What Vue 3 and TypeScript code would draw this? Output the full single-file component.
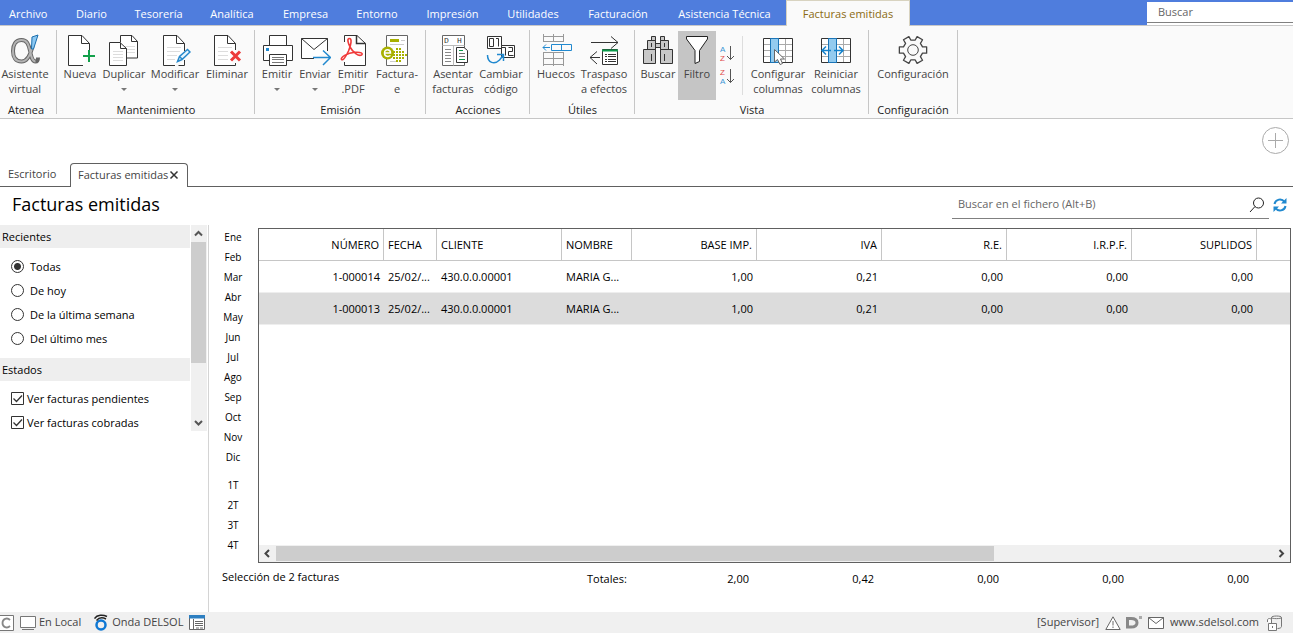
<script setup lang="ts">
import { ref } from 'vue'

interface RibbonButton {
  icon: string
  lines: string[]
  arrow?: boolean
  active?: boolean
}
interface RibbonGroup {
  key: string
  label: string
  buttons: RibbonButton[]
}
interface Column {
  key: string
  label: string
  numeric: boolean
}

const menu: string[] = [
  'Archivo', 'Diario', 'Tesorería', 'Analítica', 'Empresa', 'Entorno',
  'Impresión', 'Utilidades', 'Facturación', 'Asistencia Técnica', 'Facturas emitidas',
]

const groups: RibbonGroup[] = [
  { key: 'atenea', label: 'Atenea', buttons: [{ icon: 'alpha', lines: ['Asistente', 'virtual'] }] },
  {
    key: 'mantenimiento',
    label: 'Mantenimiento',
    buttons: [
      { icon: 'new', lines: ['Nueva'] },
      { icon: 'copy', lines: ['Duplicar'], arrow: true },
      { icon: 'edit', lines: ['Modificar'], arrow: true },
      { icon: 'delete', lines: ['Eliminar'] },
    ],
  },
  {
    key: 'emision',
    label: 'Emisión',
    buttons: [
      { icon: 'printer', lines: ['Emitir'], arrow: true },
      { icon: 'send', lines: ['Enviar'], arrow: true },
      { icon: 'pdf', lines: ['Emitir', '.PDF'] },
      { icon: 'einvoice', lines: ['Factura-', 'e'] },
    ],
  },
  {
    key: 'acciones',
    label: 'Acciones',
    buttons: [
      { icon: 'post', lines: ['Asentar', 'facturas'] },
      { icon: 'code', lines: ['Cambiar', 'código'] },
    ],
  },
  {
    key: 'utiles',
    label: 'Útiles',
    buttons: [
      { icon: 'gaps', lines: ['Huecos'] },
      { icon: 'transfer', lines: ['Traspaso', 'a efectos'] },
    ],
  },
  {
    key: 'vista',
    label: 'Vista',
    buttons: [
      { icon: 'binoculars', lines: ['Buscar'] },
      { icon: 'filter', lines: ['Filtro'], active: true },
      { icon: 'sort', lines: [] },
      { icon: 'columns', lines: ['Configurar', 'columnas'] },
      { icon: 'reset', lines: ['Reiniciar', 'columnas'] },
    ],
  },
  { key: 'config', label: 'Configuración', buttons: [{ icon: 'gear', lines: ['Configuración'] }] },
]

const sortOrders = [
  { key: 'asc', first: 'A', second: 'Z', label: 'Orden ascendente' },
  { key: 'desc', first: 'Z', second: 'A', label: 'Orden descendente' },
]

const recents: string[] = ['Todas', 'De hoy', 'De la última semana', 'Del último mes']
const recent = ref('Todas')
const states = ref([
  { label: 'Ver facturas pendientes', on: true },
  { label: 'Ver facturas cobradas', on: true },
])

const months: string[] = ['Ene', 'Feb', 'Mar', 'Abr', 'May', 'Jun', 'Jul', 'Ago', 'Sep', 'Oct', 'Nov', 'Dic']
const quarters: string[] = ['1T', '2T', '3T', '4T']

const columns: Column[] = [
  { key: 'numero', label: 'NÚMERO', numeric: true },
  { key: 'fecha', label: 'FECHA', numeric: false },
  { key: 'cliente', label: 'CLIENTE', numeric: false },
  { key: 'nombre', label: 'NOMBRE', numeric: false },
  { key: 'base', label: 'BASE IMP.', numeric: true },
  { key: 'iva', label: 'IVA', numeric: true },
  { key: 're', label: 'R.E.', numeric: true },
  { key: 'irpf', label: 'I.R.P.F.', numeric: true },
  { key: 'suplidos', label: 'SUPLIDOS', numeric: true },
]
const rows: string[][] = [
  ['1-000014', '25/02/...', '430.0.0.00001', 'MARIA G...', '1,00', '0,21', '0,00', '0,00', '0,00'],
  ['1-000013', '25/02/...', '430.0.0.00001', 'MARIA G...', '1,00', '0,21', '0,00', '0,00', '0,00'],
]
const selectedRow = ref(1)
const totals: string[] = ['2,00', '0,42', '0,00', '0,00', '0,00']

// Outline of a six-tooth gear centred in a 32-unit box.
const gearPoints: string = Array.from({ length: 6 }, (_, tooth) => {
  const profile: [number, number][] = [[-18, 10], [-13, 14], [13, 14], [18, 10]]
  return profile
    .map(([offset, radius]) => {
      const angle = ((tooth * 60 + offset) * Math.PI) / 180
      return `${(16 + radius * Math.cos(angle)).toFixed(2)},${(16 + radius * Math.sin(angle)).toFixed(2)}`
    })
    .join(' ')
}).join(' ')

// Dot matrix to the right of the e-invoice emblem.
const dots: [number, number][] = [
  [15, 14], [18, 14],
  [12, 17], [15, 17], [18, 17], [21, 17],
  [12, 20], [15, 20], [18, 20], [21, 20], [24, 20],
  [12, 23], [15, 23], [18, 23], [21, 23],
  [15, 26], [18, 26],
]
</script>

<template>
  <div class="page">
    <header class="menubar">
      <nav class="menu">
        <button
          v-for="(item, i) in menu"
          :key="item"
          type="button"
          class="menu-item"
          :class="{ first: i === 0, current: i === menu.length - 1 }"
        >{{ item }}</button>
      </nav>
      <input class="global-search" type="text" placeholder="Buscar" aria-label="Buscar" />
    </header>

    <section class="ribbon">
      <div v-for="g in groups" :key="g.key" class="group" :class="g.key">
        <div class="tools">
          <template v-for="b in g.buttons" :key="b.icon">
            <div v-if="b.icon === 'sort'" class="sorts">
              <button v-for="s in sortOrders" :key="s.key" type="button" class="sort" :aria-label="s.label">
                <svg viewBox="0 0 16 20" width="16" height="20">
                  <text x="1" y="8" class="sort-letter" :class="s.first">{{ s.first }}</text>
                  <text x="1" y="17" class="sort-letter" :class="s.second">{{ s.second }}</text>
                  <path d="M11.500 2V15.500M8 12l3.500 3.500L15 12" fill="none" stroke="#555" />
                </svg>
              </button>
            </div>
            <button v-else type="button" class="tool" :class="{ active: b.active }">
              <svg class="icon" viewBox="0 0 32 32" fill="none" stroke="#333" stroke-width="1">
                <template v-if="b.icon === 'alpha'">
                  <path d="M12.500 6C6.500 6 4 11 4 17s2.500 10.500 8.500 10.500c6 0 9-6.500 11-15.500M12.500 6c5.500 0 7 4 8.500 10.500 1.300 7 2.500 11 5.500 11 1.500 0 2.500-1 2.500-4" stroke="#666" stroke-width="4" />
                  <path d="M12.500 6C6.500 6 4 11 4 17s2.500 10.500 8.500 10.500c6 0 9-6.500 11-15.500M12.500 6c5.500 0 7 4 8.500 10.500 1.300 7 2.500 11 5.500 11" stroke="#b4b4b4" stroke-width="2" />
                  <path d="M23 3l6-2-4.500 14h-2z" fill="#8cc8f2" stroke="#1b6fae" />
                </template>
                <template v-else-if="b.icon === 'new'">
                  <path d="M19 31.500H4.500V1.500H18l7.500 8V17" fill="#fff" />
                  <path d="M17.500 1.500v8h8" />
                  <path d="M25 16v12M19 22h12" stroke="#12a04b" stroke-width="2" />
                </template>
                <template v-else-if="b.icon === 'copy'">
                  <path d="M12.500 8V1.500H24l5.500 6v16.500H19" fill="#fff" />
                  <path d="M23.500 1.500v6h6" />
                  <path d="M17 12.500h10M19 15.500h8M19 18.500h8" stroke="#ddd" />
                  <path d="M1.500 8.500H12l6.500 6v17h-17z" fill="#fff" />
                  <path d="M12.500 8.500v6h6" />
                  <path d="M5 17.500h10M5 20.500h10M5 23.500h10M5 26.500h10" stroke="#ddd" />
                </template>
                <template v-else-if="b.icon === 'edit'">
                  <path d="M16 31.500H4.500V1.500H18l7.500 8V17M25.500 26v5.500h-6" fill="#fff" />
                  <path d="M17.500 1.500v8h8" />
                  <path d="M8 13.500h14M8 17.500h13M8 21.500h10M8 25.500h8" stroke="#ddd" />
                  <path d="M18.500 27.500l2-5 8-7 2.500 2.500-8 7.500zM20.500 22.500l3 3" fill="#e8f5fd" stroke="#2789cc" stroke-width="1.500" />
                </template>
                <template v-else-if="b.icon === 'delete'">
                  <path d="M21 31.500H3.500V1.500H17l7.500 8V16M24.500 29v2.500h-4" fill="#fff" />
                  <path d="M16.500 1.500v8h8" />
                  <path d="M7 13.500h14M7 17.500h10M7 21.500h10M7 25.500h10" stroke="#ddd" />
                  <path d="M20 17.500l9 9M29 17.500l-9 9" stroke="#ed3b3b" stroke-width="3" />
                </template>
                <template v-else-if="b.icon === 'printer'">
                  <path d="M8.500 11.500v-10h17v10" fill="#fff" />
                  <path d="M8 26.500H2.500v-15h29v15H26" fill="#fff" />
                  <path d="M8.500 20.500h17v11h-17z" fill="#fff" />
                  <path d="M11 23.500h12M11 25.500h12M11 28.500h12" stroke="#777" />
                  <path d="M5 14h3v3H5z" fill="#2189cf" stroke="none" />
                </template>
                <template v-else-if="b.icon === 'send'">
                  <path d="M15 24.500H2.500v-20h26V17" fill="#fff" />
                  <path d="M2.500 4.500L15 15.500l13.500-11" />
                  <path d="M14 23.500h17M24 16.500l7.500 7-7.500 7.500" stroke="#2189cf" stroke-width="1.500" />
                </template>
                <template v-else-if="b.icon === 'pdf'">
                  <path d="M7.500 8V1.500H20l8.500 8v22h-21V28" fill="#fff" />
                  <path d="M19.500 1.500v8h9" stroke-width="1.500" />
                  <path d="M12 4.500c3.500-.5 2 6.500-.5 12.500-2.500 5.500-5.500 10-7 8.500C3 23.500 10 19 18 18.300c6-.5 8.500 1.200 6.500 2.700-3 1.500-8.500-2.500-11.500-8-2-4-3-8-1-8.500z" stroke="#f03a3a" stroke-width="1.600" />
                </template>
                <template v-else-if="b.icon === 'einvoice'">
                  <path d="M5.500 1.500h21v30h-21z" fill="#fff" stroke="#666" />
                  <path d="M9 5h9v3H9z" fill="#a8b000" stroke="none" />
                  <path d="M9 10.500h14M20 6.500h4M9 27.500h8" stroke="#ccc" />
                  <circle cx="6.500" cy="19" r="6.500" fill="#a8b000" stroke="none" />
                  <path d="M3.500 19h6c0-4-6-4.500-6 0 0 4 4 4 6 2.500" stroke="#fff" stroke-width="1.500" />
                  <rect v-for="d in dots" :key="d.join()" :x="d[0]" :y="d[1]" width="2" height="2" fill="#a8b000" stroke="none" />
                </template>
                <template v-else-if="b.icon === 'post'">
                  <path d="M5.500 1.500h22v30h-22z" fill="#fff" stroke="#666" />
                  <path d="M5.500 11.500h22M16.500 11.500v20" stroke="#bbb" />
                  <text x="7" y="9" class="glyph">D</text>
                  <text x="20" y="9" class="glyph">H</text>
                  <path d="M8 15.500h6M8 18.500h6M8 21.500h6M8 24.500h6M8 27.500h6" stroke="#888" />
                  <path d="M19.500 13.500H27l3.500 3v12h-11z" fill="#fff" />
                  <path d="M22 16.500h4M22 25.500h6" stroke="#0b9a4a" />
                  <path d="M22 19.500h6M22 22.500h6" stroke="#777" />
                </template>
                <template v-else-if="b.icon === 'code'">
                  <path d="M2.500 2.500h14v12h-14z" fill="#fff" />
                  <path d="M4.500 4.500h4v8h-4zM11 4.500h2.500v8" />
                  <path d="M16.500 11.500h13v12h-13z" fill="#fff" />
                  <path d="M16.500 13.500h4v8M23.500 13.500h4v4h-4v4h5" />
                  <path d="M2.500 21c0 8 7 10 12 5l4-5M12 20.500h6.500V27" stroke="#2189cf" stroke-width="1.500" />
                </template>
                <template v-else-if="b.icon === 'gaps'">
                  <path d="M3 2.500h21M3 7.500h21M3.500 0v8M13.500 0v8M23.500 0v8M3 18.500h21M3 24.500h21M3 30.500h21M3.500 18v14M13.500 18v14M23.500 18v14" stroke="#999" />
                  <path d="M11.500 10.500h20v6h-20zM21.500 10.500v6M3 13.500h7M6 10.500l-3 3 3 3" stroke="#2189cf" />
                </template>
                <template v-else-if="b.icon === 'transfer'">
                  <path d="M3 8.500h27M23 2.500l7 6-7 6M12 23.500H2M9 17.500l-7 6 7 6.500" />
                  <path d="M14.500 15.500h15v15h-15z" fill="#fff" />
                  <path d="M14 16.500h16" stroke="#0b9a4a" stroke-width="2" />
                  <path d="M17 20.500h2M17 22.500h2M17 25.500h2M17 27.500h2M20 20.500h8M20 22.500h8M20 25.500h8M20 27.500h8" />
                </template>
                <template v-else-if="b.icon === 'binoculars'">
                  <path d="M9.500 2.500h4v4h-4zM18.500 2.500h4v4h-4zM5.500 6.500h8v9h-8zM18.500 6.500h8v9h-8zM1.500 15.500h12v14h-12zM18.500 15.500h12v14h-12zM13.500 9.500h5v4h-5z" fill="#c8c8c8" />
                  <path d="M9.500 20v7M22.500 20v7M9.500 9v4M22.500 9v4" />
                </template>
                <template v-else-if="b.icon === 'filter'">
                  <path d="M5.500 2.500h21v2.500l-8 11.500v11l-4.500 2v-13L5.500 5z" fill="#fff" stroke="#222" />
                </template>
                <template v-else-if="b.icon === 'columns' || b.icon === 'reset'">
                  <path d="M1 4h30v25H1z" fill="#fff" stroke="none" />
                  <path d="M2 10.500h29M2 16.500h29M2 22.500h29M23.500 5v24" stroke="#aaa" />
                  <path d="M1.500 4.500h29v24h-29z" />
                  <path d="M8.500 4.500h8v24h-8z" fill="#93cbef" stroke="#1a75b8" />
                  <path
                    v-if="b.icon === 'columns'"
                    d="M12.500 15.500v12.500l3-2.500 2.500 5 2.500-1-2-4.500h4z"
                    fill="#fff"
                    stroke="#666"
                  />
                  <path v-else d="M2 16.500h9M6 12.500l-4 4 4 4M14 16.500h9M19 12.500l4 4-4 4" stroke="#1583cc" stroke-width="1.500" />
                </template>
                <template v-else-if="b.icon === 'gear'">
                  <polygon :points="gearPoints" stroke="#444" stroke-linejoin="round" stroke-width="1.300" />
                  <circle cx="16" cy="16" r="5.300" stroke="#444" />
                </template>
              </svg>
              <span v-for="l in b.lines" :key="l" class="line">{{ l }}</span>
              <span v-if="b.arrow" class="caret"></span>
            </button>
          </template>
        </div>
        <div class="group-label">{{ g.label }}</div>
      </div>
    </section>

    <div class="add-row">
      <button type="button" class="add" aria-label="Añadir">
        <svg viewBox="0 0 27 27" width="27" height="27" fill="none" stroke="#aaa">
          <circle cx="13.500" cy="13.500" r="13" />
          <path d="M6 13.500h15M13.500 6v15" />
        </svg>
      </button>
    </div>

    <div class="tabs">
      <button type="button" class="tab">Escritorio</button>
      <div class="tab open">
        <button type="button" class="tab-name">Facturas emitidas</button>
        <button type="button" class="close" aria-label="Cerrar">
          <svg viewBox="0 0 10 10" width="10" height="10"><path d="M1.500 1.500l7 7M8.500 1.500l-7 7" stroke="#333" stroke-width="1.500" /></svg>
        </button>
      </div>
      <div class="tabs-rest"></div>
    </div>

    <div class="title-row">
      <h1>Facturas emitidas</h1>
      <div class="file-search">
        <input type="text" placeholder="Buscar en el fichero (Alt+B)" aria-label="Buscar en el fichero" />
        <button type="button" aria-label="Buscar en el fichero">
          <svg viewBox="0 0 16 16" width="16" height="16" fill="none" stroke="#222">
            <circle cx="9.500" cy="6" r="5" />
            <path d="M6 9.500L1 15" />
          </svg>
        </button>
      </div>
      <button type="button" class="refresh" aria-label="Actualizar">
        <svg viewBox="0 0 14 14" width="14" height="14" fill="none" stroke="#2189cf" stroke-width="2">
          <path d="M1.500 6a5.500 5.500 0 0 1 10-2M12.500 8a5.500 5.500 0 0 1-10 2" />
          <path d="M13.500 0v5.500H8zM.5 14V8.500H6z" fill="#2189cf" stroke="none" />
        </svg>
      </button>
    </div>

    <main class="content">
      <aside class="side">
        <div class="side-scroll">
          <div class="filters">
            <h2 id="recientes">Recientes</h2>
            <div class="radios" role="radiogroup" aria-labelledby="recientes">
              <label v-for="r in recents" :key="r" class="radio">
                <input v-model="recent" type="radio" name="recent" :value="r" />{{ r }}
              </label>
            </div>
            <h2>Estados</h2>
            <div class="checks">
              <label v-for="s in states" :key="s.label" class="check">
                <input v-model="s.on" type="checkbox" />
                <svg class="tick" viewBox="0 0 13 13" width="13" height="13" fill="none" stroke="#333">
                  <path d="M.5.500h12v12H.5z" />
                  <path v-if="s.on" d="M2.500 6.500l3 3 5.500-6" stroke-width="1.300" />
                </svg>
                {{ s.label }}
              </label>
            </div>
          </div>
          <div class="vbar">
            <svg viewBox="0 0 16 17" fill="none" stroke="#555" stroke-width="2"><path d="M4 10.500L7.500 7l3.500 3.500" /></svg>
            <div class="vthumb"></div>
            <svg viewBox="0 0 16 17" fill="none" stroke="#555" stroke-width="2"><path d="M4 7l3.500 3.500L11 7" /></svg>
          </div>
        </div>
      </aside>

      <section class="workspace">
        <div class="upper">
          <div class="periods">
            <button v-for="m in months" :key="m" type="button">{{ m }}</button>
            <div class="period-gap"></div>
            <button v-for="q in quarters" :key="q" type="button">{{ q }}</button>
          </div>
          <div class="grid-box">
            <table>
              <colgroup>
                <col v-for="c in columns" :key="c.key" :class="c.key" />
                <col />
              </colgroup>
              <thead>
                <tr>
                  <th v-for="c in columns" :key="c.key" :class="{ num: c.numeric }">{{ c.label }}</th>
                  <th class="filler"></th>
                </tr>
              </thead>
              <tbody>
                <tr v-for="(r, i) in rows" :key="r[0]" :class="{ selected: i === selectedRow }" @click="selectedRow = i">
                  <td v-for="(v, j) in r" :key="j" :class="{ num: columns[j].numeric }">{{ v }}</td>
                  <td></td>
                </tr>
              </tbody>
            </table>
            <div class="hbar">
              <svg viewBox="0 0 17 17" fill="none" stroke="#444" stroke-width="2"><path d="M10 5L6.500 8.500 10 12" /></svg>
              <div class="track"><div class="hthumb"></div></div>
              <svg viewBox="0 0 17 17" fill="none" stroke="#444" stroke-width="2"><path d="M6.500 5L10 8.500 6.500 12" /></svg>
            </div>
          </div>
        </div>
        <footer class="totals">
          <span class="selection">Selección de 2 facturas</span>
          <span class="totals-label">Totales:</span>
          <span v-for="(t, i) in totals" :key="i" class="total">{{ t }}</span>
        </footer>
      </section>
    </main>

    <div class="status">
      <svg viewBox="0 0 14 16" width="14" height="16" fill="none" stroke="#777">
        <path d="M0 .5h13.500v15H0" fill="#fff" />
        <path d="M10 5C7 2 2.500 4 2.500 8s4.500 6 7.500 3" stroke-width="1.800" stroke="#888" />
      </svg>
      <svg class="screen" viewBox="0 0 16 14" width="16" height="14" fill="none" stroke="#777">
        <path d="M.5.500h15v11H.5z" fill="#fff" />
        <path d="M2 13.500h12" />
      </svg>
      <span>En Local</span>
      <svg class="wave" viewBox="0 0 14 17" width="14" height="17" fill="none">
        <circle cx="7" cy="11" r="4.500" stroke="#0f78d4" stroke-width="2.500" />
        <path d="M.5 4.500C3 .5 9 .5 13 2.500M2.500 6.500C5 3.500 9 3.500 12 5" stroke="#222" stroke-width="1.500" />
      </svg>
      <span>Onda DELSOL</span>
      <svg class="panel" viewBox="0 0 16 15" width="16" height="15" fill="none" stroke="#666">
        <path d="M.5.500h15v14H.5z" fill="#fff" />
        <path d="M0 0h16v3.500H0z" fill="#2d7fc1" stroke="none" />
        <path d="M4.500 4v10M6 6.500h8M6 8.500h8M6 10.500h8M7 13h3M11 13h3" />
      </svg>
      <div class="spring"></div>
      <span>[Supervisor]</span>
      <svg class="warn" viewBox="0 0 16 14" width="16" height="14" fill="none" stroke="#666">
        <path d="M8 .800l7.200 12.700H.8z" fill="#fff" />
        <path d="M8 5v4.500M8 10.500V12" />
      </svg>
      <svg class="brand" viewBox="0 0 16 13" width="16" height="13" fill="none">
        <path d="M1.500 2.500H5c4 0 6 1.500 6 4.200s-2 4.300-6 4.300H1.500z" stroke="#888" stroke-width="3" />
        <path d="M13 0h3v3h-3z" fill="#aaa" />
      </svg>
      <svg class="mail" viewBox="0 0 16 12" width="16" height="12" fill="none" stroke="#666">
        <path d="M.5.500h15v11H.5z" fill="#fff" />
        <path d="M.5.500L8 6.500l7.500-6" />
      </svg>
      <a href="#">www.sdelsol.com</a>
      <svg class="lock" viewBox="0 0 16 16" width="16" height="16" fill="none" stroke="#777">
        <path d="M4.500 5V2.500c0-2 10-2 10 0v9c0 1-1.500 2-4 2M4.500 2.500c0 1.500 10 1.500 10 0" />
        <path d="M1.500 8.500h8v7h-8zM5.500 11v2M.5 7V5c0-2 4-2 4 0v3" fill="#fff" />
      </svg>
    </div>
  </div>
</template>

<style>
html,
body {
  margin: 0;
  background: #fff;
}
</style>

<style scoped>
.page {
  display: flex;
  flex-direction: column;
  min-height: 100vh;
  font-family: "Open Sans", "Noto Sans", sans-serif;
  font-size: 11px;
  line-height: 15px;
  color: #000;
  overflow: hidden;
}
* {
  box-sizing: border-box;
}
svg {
  display: block;
  flex: none;
}
button {
  font: inherit;
  color: inherit;
  background: none;
  border: 0;
  padding: 0;
  margin: 0;
  white-space: nowrap;
}
input {
  font: inherit;
  margin: 0;
}

/* Menu bar */
.menubar {
  display: flex;
  justify-content: space-between;
  height: 26px;
  background: linear-gradient(#4f7ddd 25px, #c8c8c8 25px);
}
.menu {
  display: grid;
  grid-template-columns: 61px 61px 73px 74px 73px 70px 81px 80px 90px 123px 124px;
}
.menu-item {
  color: #fff;
}
.menu-item.first {
  text-align: left;
  padding-left: 9px;
}
.menu-item.current {
  background: #fafafa;
  color: #8a6a12;
  border: 1px solid #d8d3c0;
  border-bottom: 0;
}
.global-search {
  width: 146px;
  height: 21px;
  margin-top: 2px;
  border: 0;
  border-bottom: 1px solid #808080;
  padding: 0 11px 2px;
  background: #fff;
  box-shadow: 0 2px #fff;
}
input::placeholder {
  color: #666;
  opacity: 1;
}

/* Ribbon */
.ribbon {
  display: flex;
  height: 93px;
  background: #fafafa;
  border-bottom: 1px solid #c6c6c6;
}
.group {
  display: flex;
  flex-direction: column;
  padding-top: 5px;
  background: linear-gradient(#c6c6c6, #c6c6c6) right 4px / 1px 84px no-repeat;
}
.tools {
  display: grid;
  height: 69px;
}
.atenea { width: 57px; }
.atenea .tools { grid-template-columns: 50px; }
.mantenimiento { width: 198px; }
.mantenimiento .tools { grid-template-columns: 40px 48px 54px 50px; padding-left: 3px; }
.emision { width: 171px; }
.emision .tools { grid-template-columns: 38px 38px 38px 50px; padding-left: 3px; }
.acciones { width: 104px; }
.acciones .tools { grid-template-columns: 50px 46px; padding-left: 2px; }
.utiles { width: 105px; }
.utiles .tools { grid-template-columns: 46px 50px; padding-left: 3px; }
.vista { width: 234px; }
.vista .tools { grid-template-columns: 40px 38px 33px 58px 58px; padding-left: 3px; }
.config { width: 89px; }
.config .tools { grid-template-columns: 88px; }
.group-label {
  margin-top: 3px;
  text-align: center;
  line-height: 14px;
  color: #222;
}
.atenea .group-label {
  padding-right: 5px;
}
.config .group-label {
  padding-right: 1px;
}
.tool {
  display: flex;
  flex-direction: column;
  align-items: center;
  padding-top: 3px;
  color: #444;
}
.tool.active {
  background: #c5c5c5;
}
.icon {
  width: 32px;
  height: 32px;
}
.line {
  line-height: 15px;
}
.caret {
  width: 6px;
  height: 3px;
  margin-top: 7px;
  background: #777;
  clip-path: polygon(0 0, 100% 0, 50% 100%);
}
.glyph {
  font: 8px "Liberation Mono", monospace;
  fill: #333;
  stroke: none;
}
.sorts {
  display: flex;
  flex-direction: column;
  gap: 3px;
  margin-right: 6px;
  padding: 13px 0 0 3px;
  background: linear-gradient(#ddd, #ddd) right 5px / 1px 59px no-repeat;
}
.sort-letter {
  font: 8px "Liberation Sans", sans-serif;
}
.sort-letter.A {
  fill: #3a97d6;
}
.sort-letter.Z {
  fill: #e04b4b;
}

/* Document tabs */
.add-row {
  display: flex;
  justify-content: flex-end;
  height: 44px;
  padding: 8px 4px 0 0;
}
.add {
  width: 27px;
  height: 27px;
}
.tabs {
  display: flex;
  height: 24px;
  color: #444;
}
.tab {
  display: flex;
  align-items: center;
  width: 70px;
  padding: 0 0 2px 8px;
  border-bottom: 1px solid #606060;
}
.tab.open {
  width: 118px;
  padding: 0 8px 2px 7px;
  justify-content: space-between;
  border: 1px solid #606060;
  border-bottom: 0;
  border-radius: 4px 4px 0 0;
}
.tab-name {
  padding-bottom: 1px;
}
.tabs-rest {
  flex: 1;
  border-bottom: 1px solid #606060;
}
.title-row {
  display: flex;
  align-items: flex-start;
  height: 38px;
  padding-right: 6px;
}
h1 {
  flex: 1;
  margin: 0;
  padding: 5px 0 0 12px;
  font-size: 18px;
  line-height: 24px;
  font-weight: 400;
}
.file-search {
  display: flex;
  align-items: center;
  width: 317px;
  height: 32px;
  margin-right: 4px;
  padding: 4px 4px 0 6px;
  border-bottom: 1px solid #808080;
}
.file-search input {
  flex: 1;
  border: 0;
  padding: 0 0 2px;
  background: none;
}
.refresh {
  margin-top: 11px;
}

/* Sidebar */
.content {
  flex: 1;
  display: flex;
}
.side {
  width: 209px;
  flex: none;
  border-right: 1px solid #d4d4d4;
}
.side-scroll {
  display: flex;
  gap: 1px;
  height: 206px;
}
.filters {
  width: 190px;
}
h2 {
  margin: 0;
  padding: 0 2px;
  background: #eee;
  font-size: 11px;
  font-weight: 400;
  line-height: 23px;
}
.radios {
  padding: 6px 0 8px 11px;
}
.checks {
  padding: 5px 0 0 11px;
}
.radio,
.check {
  display: flex;
  align-items: center;
  height: 24px;
  gap: 6px;
}
.check {
  position: relative;
  gap: 3px;
}
.radio input {
  appearance: none;
  width: 13px;
  height: 13px;
  border: 1px solid #333;
  border-radius: 50%;
  background: #fff;
}
.radio input:checked {
  background: radial-gradient(circle, #333 3px, #fff 4px);
}
.check input {
  position: absolute;
  width: 13px;
  height: 13px;
  opacity: 0;
}
.vbar {
  display: flex;
  flex-direction: column;
  justify-content: space-between;
  width: 16px;
  background: #f0f0f0;
}
.vthumb {
  height: 121px;
  margin-bottom: 51px;
  width: 15px;
  background: #cdcdcd;
}

/* Workspace */
.workspace {
  flex: 1;
  min-width: 0;
  display: flex;
  flex-direction: column;
}
.upper {
  flex: 1;
  display: flex;
  padding: 3px 2px 0 0;
}
.periods {
  display: flex;
  flex-direction: column;
  width: 49px;
  flex: none;
  font-size: 10px;
}
.periods button {
  height: 20px;
  padding: 0 1px 2px 0;
}
.period-gap {
  height: 8px;
}
.grid-box {
  flex: 1;
  min-width: 0;
  display: flex;
  flex-direction: column;
  justify-content: space-between;
  border: 1px solid #606060;
  overflow: hidden;
}
table {
  width: 100%;
  table-layout: fixed;
  border-collapse: separate;
  border-spacing: 0;
}
col.numero,
col.cliente,
col.base,
col.iva,
col.re,
col.irpf,
col.suplidos {
  width: 125px;
}
col.fecha {
  width: 53px;
}
col.nombre {
  width: 70px;
}
th,
td {
  height: 32px;
  padding: 0 4px;
  font-weight: 400;
  text-align: left;
  white-space: nowrap;
}
th {
  border-right: 1px solid #c6c6c6;
  border-bottom: 1px solid #c6c6c6;
}
th.filler {
  border-right: 0;
}
td {
  border-bottom: 1px solid #eee;
}
th.num,
td.num {
  text-align: right;
}
.selected {
  background: #dcdcdc;
}
.hbar {
  display: flex;
  height: 17px;
  background: #f0f0f0;
}
.hbar svg {
  width: 17px;
}
.track {
  flex: 1;
}
.hthumb {
  width: 72%;
  height: 15px;
  margin-top: 1px;
  background: #cdcdcd;
}
.totals {
  display: grid;
  grid-template-columns: 362px 40px repeat(5, 125px);
  height: 49px;
  padding: 8px 0 0 13px;
  white-space: nowrap;
}
.selection {
  margin-top: -2px;
}
.totals-label {
  padding-left: 3px;
}
.total {
  text-align: right;
}

/* Status bar */
.status {
  display: flex;
  align-items: center;
  height: 21px;
  padding-right: 10px;
  background: #f0f0f0;
  color: #444;
}
.status span,
.status a {
  padding-bottom: 2px;
}
.screen {
  margin: 0 3px 0 6px;
}
.wave {
  margin: 0 4px 0 13px;
}
.panel {
  margin-left: 6px;
}
.spring {
  flex: 1;
}
.warn {
  margin: 0 5px 0 6px;
}
.mail {
  margin: 0 6px;
}
.status a {
  color: inherit;
  text-decoration: none;
  margin-right: 8px;
}
</style>
